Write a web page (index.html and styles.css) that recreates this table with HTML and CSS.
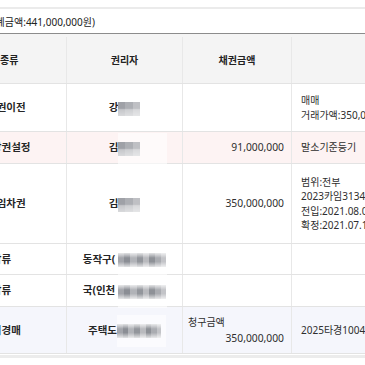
FILE: index.html
```html
<!DOCTYPE html>
<html lang="ko">
<head>
<meta charset="utf-8">
<title>등기부 권리 현황</title>
<link rel="stylesheet" href="styles.css">
</head>
<body>
<div class="wrap">
  <div class="summary">(채권합계금액:441,000,000원)</div>
  <div class="row row-head">
    <div class="cell c1h">등기종류</div>
    <div class="cell c2h">권리자</div>
    <div class="cell c3h">채권금액</div>
    <div class="cell c4"></div>
  </div>
  <div class="row r-48">
    <div class="cell c1">소유권이전</div>
    <div class="cell c2">강<span class="mask mask-short"></span></div>
    <div class="cell c3"></div>
    <div class="cell c4"><div>매매<br>거래가액:350,000,000원</div></div>
  </div>
  <div class="row r-32 row-pink">
    <div class="cell c1">근저당권설정</div>
    <div class="cell c2">김<span class="mask mask-short"></span></div>
    <div class="cell c3">91,000,000</div>
    <div class="cell c4">말소기준등기</div>
  </div>
  <div class="row r-80">
    <div class="cell c1">주택임차권</div>
    <div class="cell c2">김<span class="mask mask-short"></span></div>
    <div class="cell c3">350,000,000</div>
    <div class="cell c4"><div>범위:전부<br>2023카임31348<br>전입:2021.08.09<br>확정:2021.07.19</div></div>
  </div>
  <div class="row r-31">
    <div class="cell c1">압류</div>
    <div class="cell c2">동작구(<span class="mask mask-cut"></span></div>
    <div class="cell c3"></div>
    <div class="cell c4"></div>
  </div>
  <div class="row r-32">
    <div class="cell c1">압류</div>
    <div class="cell c2">국(인천<span class="mask mask-cut"></span></div>
    <div class="cell c3"></div>
    <div class="cell c4"></div>
  </div>
  <div class="row r-47 row-lav">
    <div class="cell c1">임의경매</div>
    <div class="cell c2">주택도<span class="mask mask-mid"></span></div>
    <div class="cell c3 c3-stack"><span class="lbl">청구금액</span><span class="num">350,000,000</span></div>
    <div class="cell c4">2025타경100481</div>
  </div>
  <div class="foot"></div>
</div>
</body>
</html>
```

FILE: styles.css
```css
html, body {
  margin: 0;
  padding: 0;
  background: #ffffff;
  overflow: hidden;
}
body {
  font-family: "Noto Sans", "Noto Sans CJK KR", sans-serif;
  font-size: 10px;
  color: #2e2e2e;
}
.wrap {
  width: 518px;
  margin-left: -66px;
  padding-top: 7px;
  white-space: nowrap;
}
.summary {
  box-sizing: border-box;
  height: 27px;
  border-top: 2px solid #ebebeb;
  border-bottom: 1px solid #8c8c8c;
  padding: 6px 0 0 31px;
  line-height: 15px;
  color: #222222;
}
.row {
  box-sizing: border-box;
  display: grid;
  grid-template-columns: 133px 116px 109px 160px;
  border-bottom: 1px solid #e3e3e3;
}
.row-head {
  height: 50px;
  padding-top: 3px;
  background: #f4f4f4;
  font-weight: 700;
  color: #222222;
}
.r-48 { height: 48px; }
.r-32 { height: 32px; }
.r-80 { height: 80px; }
.r-31 { height: 31px; }
.r-47 { height: 47px; }
.row-pink { background: #fdf3f3; }
.row-lav { background: #f5f6fc; }
.cell {
  display: flex;
  align-items: center;
  border-right: 1px solid #e8e8e8;
  line-height: 14.5px;
  min-width: 0;
}
.c1h, .c2h, .c3h {
  justify-content: center;
}
.c1, .c2 {
  justify-content: center;
  font-size: 10.5px;
  font-weight: 700;
  color: #262626;
}
.c1 {
  padding-left: 3px;
}
.c3 {
  justify-content: flex-end;
  padding-right: 7px;
  font-size: 10.3px;
  color: #2e2e2e;
}
.c3-stack {
  flex-direction: column;
  align-items: stretch;
  justify-content: center;
  padding-left: 5px;
  line-height: 16px;
}
.c3-stack .lbl { text-align: left; font-size: 10px; }
.c3-stack .num { text-align: right; }
.c4 {
  padding-left: 9px;
  border-right: none;
  color: #2e2e2e;
}
.mask {
  position: relative;
  display: inline-block;
  width: 48px;
  height: 14px;
  margin-top: 2px;
}
.mask-cut {
  margin-left: 3px;
}
.mask::before {
  content: "";
  position: absolute;
  left: 0;
  top: -9px;
  width: 49px;
  bottom: -9px;
  background: rgba(255, 255, 255, 0.6);
}
.mask::after {
  content: "";
  position: absolute;
  inset: 0;
  background:
    linear-gradient(180deg, rgba(255,255,255,0.75) 0, rgba(255,255,255,0) 35%, rgba(255,255,255,0) 62%, rgba(255,255,255,0.75) 100%),
    linear-gradient(90deg, #a3a5ab 0 13%, #8b8e95 13% 26%, #b1b3b8 26% 39%, #93969c 39% 52%, #b9babe 52% 65%, #8e9197 65% 78%, #aaacb1 78% 90%, #c3c4c8 90% 100%);
  filter: blur(0.7px);
}
.mask-short {
  width: 22px;
}
.mask-short::after {
  background:
    linear-gradient(180deg, rgba(255,255,255,0) 0, rgba(255,255,255,0) 45%, rgba(255,255,255,0.4) 55%, rgba(255,255,255,0.6) 100%),
    linear-gradient(90deg, #9fa1a7 0 33%, #adafb4 33% 66%, #bfc0c4 66% 100%);
}
.mask-mid {
  width: 44px;
}
.foot {
  height: 3px;
  margin-top: 1px;
  background: #ececec;
}
```
